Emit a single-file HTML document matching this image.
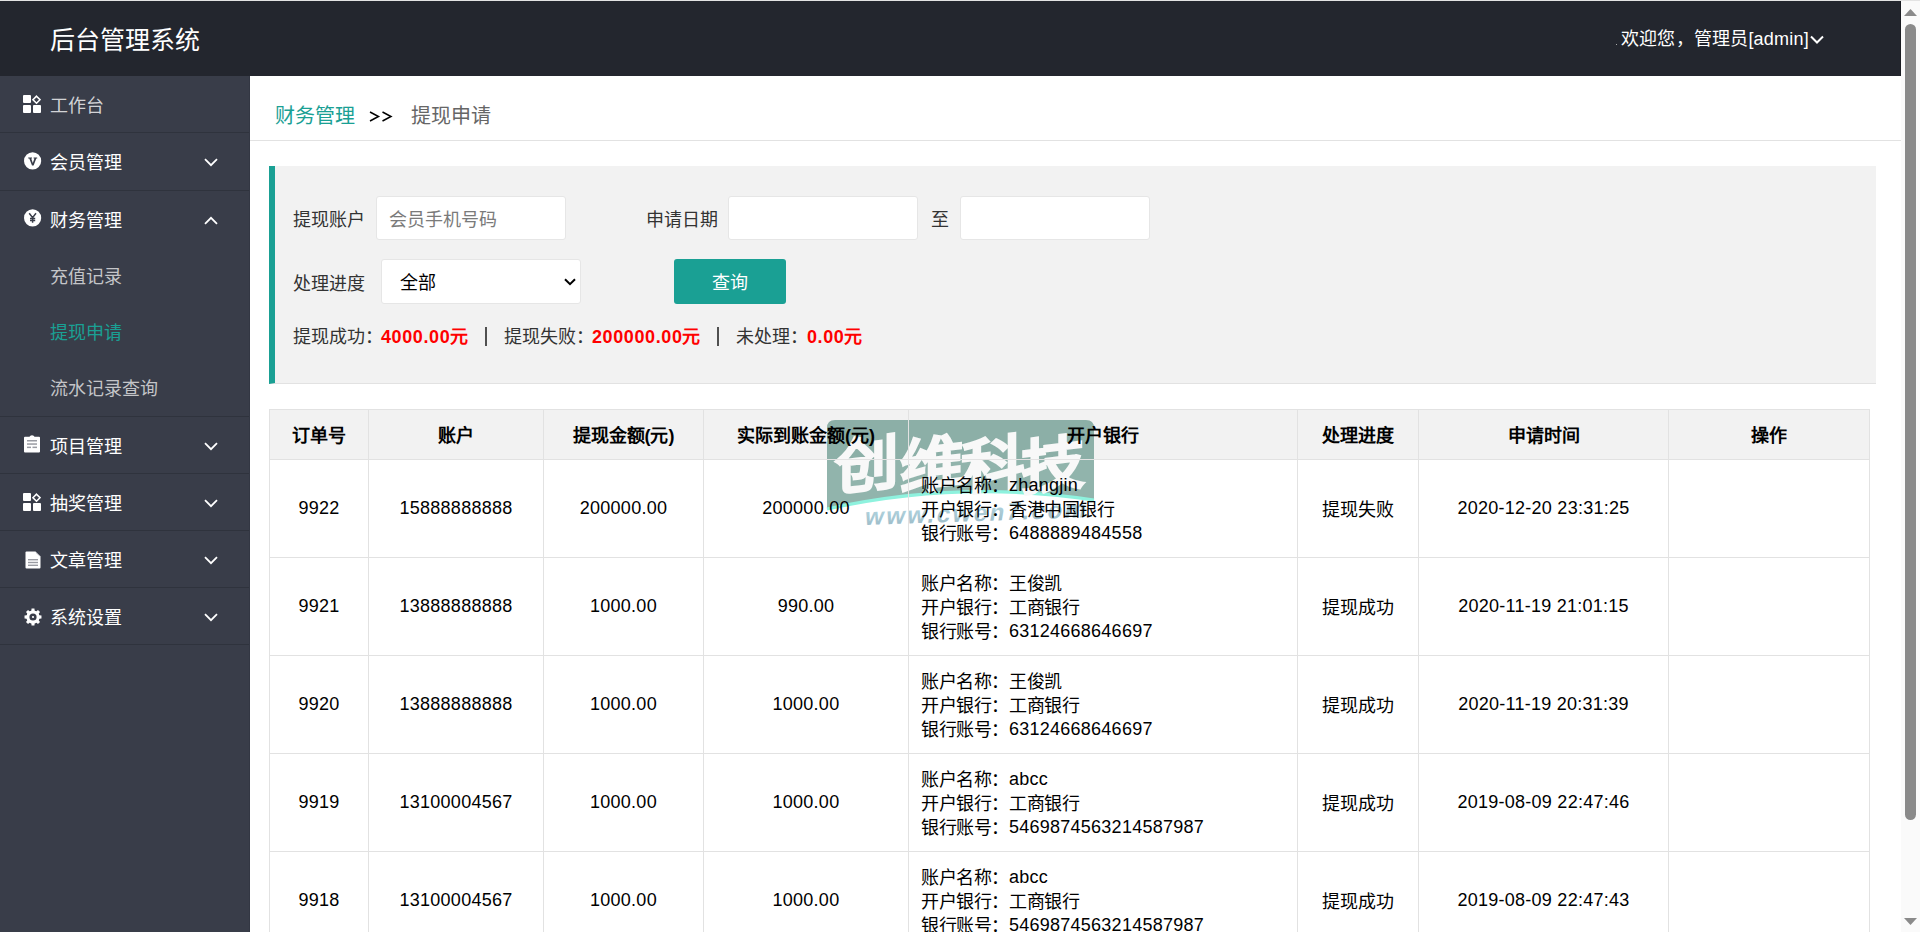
<!DOCTYPE html>
<html lang="zh-CN"><head><meta charset="utf-8"><title>后台管理系统</title>
<style>
*{margin:0;padding:0;box-sizing:border-box}
html,body{width:1920px;height:932px;overflow:hidden;background:#fff;font-family:"Liberation Sans",sans-serif;color:#333}
#topline{position:absolute;left:0;top:0;width:1920px;height:1px;background:#e3e3e3}
#header{position:absolute;left:0;top:1px;width:1901px;height:75px;background:#23262e;border-right:1px solid #1a1c22}
#title{position:absolute;left:50px;top:1px;line-height:76px;font-size:25px;color:#fff;white-space:nowrap}
#welcome{position:absolute;left:1621px;top:18px;line-height:40px;font-size:18px;color:#fff;white-space:nowrap;letter-spacing:0.2px}
#dot{position:absolute;left:1616px;top:43px;width:1px;height:1px;background:#aaa}
#uchev{position:absolute;left:1810px;top:34px;width:14px;height:9px}
#side{position:absolute;left:0;top:76px;width:250px;height:856px;background:#393d49;border-right:1px solid #333743}
.nav{position:absolute;left:0;width:249px;height:57px;border-bottom:1px solid #2f333d}
.nav .txt{position:absolute;left:50px;top:2px;line-height:56px;font-size:18px;color:#fff;white-space:nowrap}
.ico{position:absolute;width:18px;height:18px}
.chev{position:absolute;left:204px;top:25px;width:14px;height:9px}
.sub{position:absolute;left:50px;margin-top:2px;line-height:56px;font-size:18px;color:#c4c5c8;white-space:nowrap}
#content{position:absolute;left:250px;top:76px;width:1651px;height:856px;background:#fff}
#crumb{position:absolute;left:250px;top:76px;width:1651px;height:65px;border-bottom:1px solid #e2e2e2}
.cr{position:absolute;top:96px;line-height:40px;font-size:20px;white-space:nowrap}
#quote{position:absolute;left:269px;top:166px;width:1607px;height:218px;background:#f2f2f2;border-left:6px solid #1aa094;border-bottom:1px solid #e2e2e2}
.lbl{position:absolute;line-height:40px;font-size:18px;color:#333;white-space:nowrap}
.inp{position:absolute;top:196px;width:190px;height:44px;background:#fff;border:1px solid #e6e6e6;border-radius:3px}
.ph{position:absolute;left:12px;top:3px;line-height:40px;font-size:18px;color:#7a7a7a;white-space:nowrap}
#sel{position:absolute;left:381px;top:259px;width:200px;height:45px;background:#fff;border:1px solid #e6e6e6;border-radius:3px}
#btn{position:absolute;left:674px;top:259px;width:112px;height:45px;background:#1aa094;border-radius:3px;color:#fff;font-size:18px;line-height:49px;text-align:center}
.red{position:absolute;line-height:40px;font-size:18px;color:#f00;font-weight:bold;white-space:nowrap;letter-spacing:0.6px}
.bar{position:absolute;top:327px;width:2px;height:19px;background:#505050}
.thbg{position:absolute;left:269px;top:409px;width:1601px;height:50px;background:#f2f2f2}
.hl{position:absolute;left:269px;width:1601px;height:1px;background:#e2e2e2}
.vl{position:absolute;top:409px;width:1px;height:523px;background:#e2e2e2}
.th{position:absolute;top:416px;line-height:40px;font-size:18px;font-weight:bold;color:#000;text-align:center;white-space:nowrap}
.td{position:absolute;line-height:40px;font-size:18px;color:#000;text-align:center;white-space:nowrap;letter-spacing:0.25px}
.bank{position:absolute;left:921px;line-height:24px;font-size:18px;color:#000;white-space:nowrap;letter-spacing:0.25px}
.c{position:relative;top:1px;letter-spacing:-0.4px}
#scroll{position:absolute;left:1901px;top:1px;width:19px;height:931px;background:#fafafa}
#thumb{position:absolute;left:1905px;top:24px;width:11px;height:796px;background:#8a8a8a;border-radius:6px}
#wm{position:absolute;left:826px;top:419px;width:270px;height:110px}
</style></head><body>
<div id="topline"></div>
<div id="header"><div id="title">后台管理系统</div>
<div id="welcome">欢迎您，管理员[admin]</div><div id="dot"></div>
<svg id="uchev" viewBox="0 0 14 9"><path d="M1 1.5 L7 7.5 L13 1.5" fill="none" stroke="#fff" stroke-width="2"/></svg>
</div>
<div id="side">
 <div class="nav" style="top:0;height:57px"><svg class="ico" viewBox="0 0 18 18" style="left:23px;top:19px"><rect x="0" y="0" width="8" height="8" rx="1" fill="#fff"/><rect x="0" y="10" width="8" height="8" rx="1" fill="#fff"/><rect x="10" y="10" width="8" height="8" rx="1" fill="#fff"/><path d="M13.5 1.2 L17 4.7 L13.5 8.2 L10 4.7 Z" fill="none" stroke="#fff" stroke-width="1.6"/></svg><div class="txt" style="color:#d2d3d6">工作台</div></div>
 <div class="nav" style="top:57px;height:58px"><svg class="ico" viewBox="0 0 18 18" style="left:24px;top:19px;width:18px;height:18px"><circle cx="8.6" cy="8.9" r="8.6" fill="#fff"/><path d="M4.2 5.6 H8 V6.6 H7.2 L8.8 11 L10.4 6.6 H9.6 V5.6 H13.2 V6.6 H12.3 L9.6 13.4 H8 L5.3 6.6 H4.2 Z" fill="#393d49"/></svg><div class="txt">会员管理</div><svg class="chev" viewBox="0 0 14 9"><path d="M1 1.2 L7 7.2 L13 1.2" fill="none" stroke="#fff" stroke-width="1.8"/></svg></div>
 <div class="nav" style="top:115px;height:226px"><svg class="ico" viewBox="0 0 18 18" style="left:24px;top:18px;width:18px;height:18px"><circle cx="8.6" cy="8.9" r="8.6" fill="#fff"/><path d="M5.2 4.2 L8.6 8.6 L12 4.2 M8.6 8.6 V13.8 M6 9.4 H11.2 M6 11.4 H11.2" fill="none" stroke="#393d49" stroke-width="1.5"/></svg><div class="txt">财务管理</div><svg class="chev" viewBox="0 0 14 9"><path d="M1 7.8 L7 1.8 L13 7.8" fill="none" stroke="#fff" stroke-width="1.8"/></svg>
  <div class="sub" style="top:56px">充值记录</div>
  <div class="sub" style="top:112px;color:#1aa094">提现申请</div>
  <div class="sub" style="top:168px">流水记录查询</div>
 </div>
 <div class="nav" style="top:341px"><svg class="ico" viewBox="0 0 18 18" style="left:23px;top:18px;width:18px;height:18px"><path d="M2 1.8 H6.5 Q7 0.3 9 0.3 Q11 0.3 11.5 1.8 H16 Q17 1.8 17 2.8 V16.5 Q17 17.5 16 17.5 H2 Q1 17.5 1 16.5 V2.8 Q1 1.8 2 1.8 Z" fill="#fff"/><rect x="4" y="5" width="10" height="1.5" fill="#9a9ca3"/><rect x="4" y="8.3" width="10" height="1.5" fill="#9a9ca3"/><rect x="4" y="11.6" width="4" height="1.5" fill="#9a9ca3"/><rect x="9.5" y="11.6" width="4.5" height="1.5" fill="#9a9ca3"/></svg><div class="txt">项目管理</div><svg class="chev" viewBox="0 0 14 9"><path d="M1 1.2 L7 7.2 L13 1.2" fill="none" stroke="#fff" stroke-width="1.8"/></svg></div>
 <div class="nav" style="top:398px"><svg class="ico" viewBox="0 0 18 18" style="left:23px;top:19px"><rect x="0" y="0" width="8" height="8" rx="1" fill="#fff"/><rect x="0" y="10" width="8" height="8" rx="1" fill="#fff"/><rect x="10" y="10" width="8" height="8" rx="1" fill="#fff"/><path d="M13.5 1.2 L17 4.7 L13.5 8.2 L10 4.7 Z" fill="none" stroke="#fff" stroke-width="1.6"/></svg><div class="txt">抽奖管理</div><svg class="chev" viewBox="0 0 14 9"><path d="M1 1.2 L7 7.2 L13 1.2" fill="none" stroke="#fff" stroke-width="1.8"/></svg></div>
 <div class="nav" style="top:455px"><svg class="ico" viewBox="0 0 18 18" style="left:24px;top:20px;width:18px;height:18px"><path d="M2.5 0.5 H11.5 L16.5 5.2 V16.5 Q16.5 17.5 15.5 17.5 H2.5 Q1.5 17.5 1.5 16.5 V1.5 Q1.5 0.5 2.5 0.5 Z" fill="#fff"/><path d="M11.8 1.2 L15.8 4.9" stroke="#9a9ca3" stroke-width="1"/><rect x="4" y="8" width="10" height="1.4" fill="#9a9ca3"/><rect x="4" y="10.8" width="10" height="1.4" fill="#9a9ca3"/><rect x="4" y="13.6" width="10" height="1.4" fill="#9a9ca3"/></svg><div class="txt">文章管理</div><svg class="chev" viewBox="0 0 14 9"><path d="M1 1.2 L7 7.2 L13 1.2" fill="none" stroke="#fff" stroke-width="1.8"/></svg></div>
 <div class="nav" style="top:512px"><svg class="ico" viewBox="0 0 18 18" style="left:24px;top:20px;width:18px;height:18px"><path d="M15.18 7.35 L17.48 7.55 L17.48 10.45 L15.18 10.65 L14.54 12.21 L16.02 13.96 L13.96 16.02 L12.21 14.54 L10.65 15.18 L10.45 17.48 L7.55 17.48 L7.35 15.18 L5.79 14.54 L4.04 16.02 L1.98 13.96 L3.46 12.21 L2.82 10.65 L0.52 10.45 L0.52 7.55 L2.82 7.35 L3.46 5.79 L1.98 4.04 L4.04 1.98 L5.79 3.46 L7.35 2.82 L7.55 0.52 L10.45 0.52 L10.65 2.82 L12.21 3.46 L13.96 1.98 L16.02 4.04 L14.54 5.79 Z" fill="#fff"/><circle cx="9" cy="9" r="6.6" fill="#fff"/><circle cx="9" cy="9" r="3.6" fill="#393d49"/><circle cx="9" cy="9" r="1.1" fill="#fff"/></svg><div class="txt">系统设置</div><svg class="chev" viewBox="0 0 14 9"><path d="M1 1.2 L7 7.2 L13 1.2" fill="none" stroke="#fff" stroke-width="1.8"/></svg></div>
</div>
<div id="content"></div>
<div id="crumb"></div>
<div class="cr" style="left:275px;color:#1aa094">财务管理</div>
<svg style="position:absolute;left:369px;top:111px;width:24px;height:11px" viewBox="0 0 24 11"><path d="M1 1 L9.5 5.5 L1 10 M13.5 1 L22 5.5 L13.5 10" fill="none" stroke="#000" stroke-width="1.5"/></svg>
<div class="cr" style="left:411px;color:#666">提现申请</div>
<div id="quote"></div>
<div class="lbl" style="left:293px;top:200px">提现账户</div>
<div class="inp" style="left:376px"><div class="ph">会员手机号码</div></div>
<div class="lbl" style="left:646px;top:200px">申请日期</div>
<div class="inp" style="left:728px"></div>
<div class="lbl" style="left:931px;top:200px">至</div>
<div class="inp" style="left:960px"></div>
<div class="lbl" style="left:293px;top:264px">处理进度</div>
<div id="sel"><div class="ph" style="left:18px;top:3px;color:#000">全部</div>
<svg style="position:absolute;left:182px;top:18px;width:12px;height:8px" viewBox="0 0 12 8"><path d="M1 1.2 L6 6.2 L11 1.2" fill="none" stroke="#000" stroke-width="2"/></svg></div>
<div id="btn">查询</div>
<div class="lbl" style="left:293px;top:317px">提现成功：</div>
<div class="red" style="left:381px;top:317px">4000.00元</div>
<div class="bar" style="left:485px"></div>
<div class="lbl" style="left:504px;top:317px">提现失败：</div>
<div class="red" style="left:592px;top:317px">200000.00元</div>
<div class="bar" style="left:717px"></div>
<div class="lbl" style="left:736px;top:317px">未处理：</div>
<div class="red" style="left:807px;top:317px">0.00元</div>
<div class="thbg"></div>
<svg id="wm" viewBox="824 417 276 115" style="position:absolute;left:824px;top:417px;width:276px;height:115px">
<defs><linearGradient id="wg" x1="0" y1="0" x2="0" y2="1"><stop offset="0" stop-color="#b8dde8"/><stop offset="1" stop-color="#9ab8c4"/></linearGradient></defs>
<path d="M827 428 Q827 420 835 420 L1086 420 Q1094 420 1094 428 L1094 500 Q959.5 479.5 827 509 Z" fill="rgba(78,134,121,0.62)"/>
<path d="M827 509 Q959.5 479.5 1094 500" fill="none" stroke="#8ef2de" stroke-width="3.2"/>
<g fill="#f8f8f8" stroke="#f8f8f8" stroke-width="1.6" font-size="58" font-weight="bold" text-anchor="middle">
<g transform="translate(867.5 462) skewY(-7)"><text x="0" y="24" transform="scale(1.1 1.02)">创</text></g>
<g transform="translate(932.5 462) skewY(-7)"><text x="0" y="24" transform="scale(1.1 1.02)">维</text></g>
<g transform="translate(993 462) skewY(-7)"><text x="0" y="24" transform="scale(1.1 1.02)">科</text></g>
<g transform="translate(1053 462) skewY(-7)"><text x="0" y="24" transform="scale(1.1 1.02)">技</text></g>
</g>
<g transform="translate(864 525) rotate(-2) skewX(-12)"><text x="0" y="0" font-size="24" font-weight="bold" fill="url(#wg)" letter-spacing="2.5">www.cwen7.com</text></g>
</svg>
<div class="hl" style="top:409px"></div>
<div class="hl" style="top:459px"></div>
<div class="hl" style="top:557px"></div>
<div class="hl" style="top:655px"></div>
<div class="hl" style="top:753px"></div>
<div class="hl" style="top:851px"></div>
<div class="vl" style="left:269px"></div>
<div class="vl" style="left:368px"></div>
<div class="vl" style="left:543px"></div>
<div class="vl" style="left:703px"></div>
<div class="vl" style="left:908px"></div>
<div class="vl" style="left:1297px"></div>
<div class="vl" style="left:1418px"></div>
<div class="vl" style="left:1668px"></div>
<div class="vl" style="left:1869px"></div>
<div class="th" style="left:270px;width:98px">订单号</div>
<div class="th" style="left:369px;width:174px">账户</div>
<div class="th" style="left:544px;width:159px">提现金额(元)</div>
<div class="th" style="left:704px;width:204px">实际到账金额(元)</div>
<div class="th" style="left:909px;width:388px">开户银行</div>
<div class="th" style="left:1298px;width:120px">处理进度</div>
<div class="th" style="left:1419px;width:249px">申请时间</div>
<div class="th" style="left:1669px;width:200px">操作</div>
<div class="td" style="left:270px;width:98px;top:488px">9922</div>
<div class="td" style="left:369px;width:174px;top:488px">15888888888</div>
<div class="td" style="left:544px;width:159px;top:488px">200000.00</div>
<div class="td" style="left:704px;width:204px;top:488px">200000.00</div>
<div class="bank" style="top:473px"><span class="c">账户名称：</span>zhangjin<br><span class="c">开户银行：香港中国银行</span><br><span class="c">银行账号：</span>6488889484558</div>
<div class="td" style="left:1298px;width:120px;top:490px">提现失败</div>
<div class="td" style="left:1419px;width:249px;top:488px">2020-12-20 23:31:25</div>
<div class="td" style="left:270px;width:98px;top:586px">9921</div>
<div class="td" style="left:369px;width:174px;top:586px">13888888888</div>
<div class="td" style="left:544px;width:159px;top:586px">1000.00</div>
<div class="td" style="left:704px;width:204px;top:586px">990.00</div>
<div class="bank" style="top:571px"><span class="c">账户名称：王俊凯</span><br><span class="c">开户银行：工商银行</span><br><span class="c">银行账号：</span>63124668646697</div>
<div class="td" style="left:1298px;width:120px;top:588px">提现成功</div>
<div class="td" style="left:1419px;width:249px;top:586px">2020-11-19 21:01:15</div>
<div class="td" style="left:270px;width:98px;top:684px">9920</div>
<div class="td" style="left:369px;width:174px;top:684px">13888888888</div>
<div class="td" style="left:544px;width:159px;top:684px">1000.00</div>
<div class="td" style="left:704px;width:204px;top:684px">1000.00</div>
<div class="bank" style="top:669px"><span class="c">账户名称：王俊凯</span><br><span class="c">开户银行：工商银行</span><br><span class="c">银行账号：</span>63124668646697</div>
<div class="td" style="left:1298px;width:120px;top:686px">提现成功</div>
<div class="td" style="left:1419px;width:249px;top:684px">2020-11-19 20:31:39</div>
<div class="td" style="left:270px;width:98px;top:782px">9919</div>
<div class="td" style="left:369px;width:174px;top:782px">13100004567</div>
<div class="td" style="left:544px;width:159px;top:782px">1000.00</div>
<div class="td" style="left:704px;width:204px;top:782px">1000.00</div>
<div class="bank" style="top:767px"><span class="c">账户名称：</span>abcc<br><span class="c">开户银行：工商银行</span><br><span class="c">银行账号：</span>5469874563214587987</div>
<div class="td" style="left:1298px;width:120px;top:784px">提现成功</div>
<div class="td" style="left:1419px;width:249px;top:782px">2019-08-09 22:47:46</div>
<div class="td" style="left:270px;width:98px;top:880px">9918</div>
<div class="td" style="left:369px;width:174px;top:880px">13100004567</div>
<div class="td" style="left:544px;width:159px;top:880px">1000.00</div>
<div class="td" style="left:704px;width:204px;top:880px">1000.00</div>
<div class="bank" style="top:865px"><span class="c">账户名称：</span>abcc<br><span class="c">开户银行：工商银行</span><br><span class="c">银行账号：</span>5469874563214587987</div>
<div class="td" style="left:1298px;width:120px;top:882px">提现成功</div>
<div class="td" style="left:1419px;width:249px;top:880px">2019-08-09 22:47:43</div>

<div id="scroll"></div>
<svg style="position:absolute;left:1903px;top:8px;width:15px;height:9px" viewBox="0 0 15 9"><path d="M1 8 L7.5 1 L14 8 Z" fill="#8a8a8a"/></svg>
<div id="thumb"></div>
<svg style="position:absolute;left:1903px;top:917px;width:15px;height:9px" viewBox="0 0 15 9"><path d="M1 1 L7.5 8 L14 1 Z" fill="#8a8a8a"/></svg>
</body></html>
